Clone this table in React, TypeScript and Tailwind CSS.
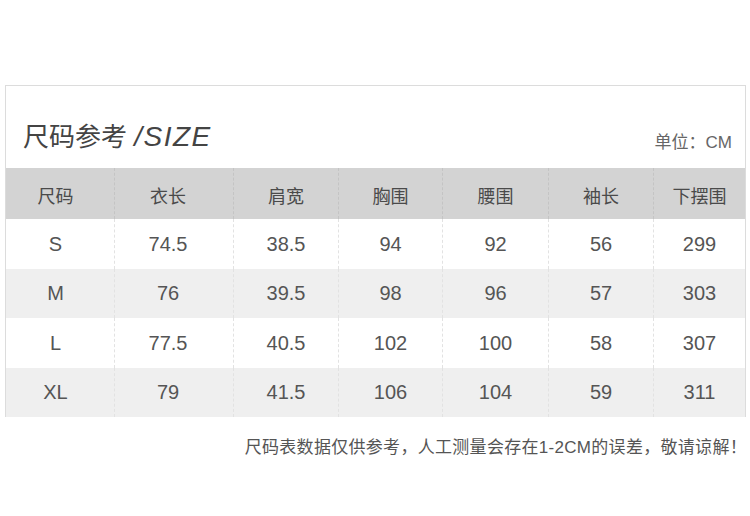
import React from "react";

const headers = ["尺码", "衣长", "肩宽", "胸围", "腰围", "袖长", "下摆围"];

const rows = [
  ["S", "74.5", "38.5", "94", "92", "56", "299"],
  ["M", "76", "39.5", "98", "96", "57", "303"],
  ["L", "77.5", "40.5", "102", "100", "58", "307"],
  ["XL", "79", "41.5", "106", "104", "59", "311"],
];

const cols = "grid grid-cols-[109px_119px_105px_104px_106px_105px_1fr]";
const font = "font-['Liberation_Sans','Noto_Sans_CJK_SC',sans-serif]";

// first two columns sit a bit left of centre in the original
const shift = ["pr-[9px]", "pr-[12px]", "", "", "", "", ""];

const App = () => {
  return (
    <div className={`w-[750px] h-[516px] bg-white pt-[85px] text-[#4a4a4a] ${font}`}>
      <div className="ml-[5px] w-[741px] border-l border-r border-t border-[#dcdcdc]">
        <div className="h-[82px] flex justify-between items-baseline pt-[35px] pl-[17px] pr-[13px]">
          <div className="text-[26px] leading-[32px] text-[#444]">
            尺码参考 <span className="italic text-[28px] tracking-[1.5px]">/SIZE</span>
          </div>
          <div className="text-[17px] text-[#666] translate-y-[2px]">单位：CM</div>
        </div>

        <div className={`${cols} bg-[#d3d3d3] h-[51px]`}>
          {headers.map((h, i) => (
            <div
              key={h}
              className={`flex items-center justify-center pt-[7px] text-[18px] ${shift[i]} ${
                i < 6 ? "border-r border-dashed border-[#c4c4c4]" : ""
              }`}
            >
              {h}
            </div>
          ))}
        </div>

        {rows.map((r, ri) => (
          <div
            key={r[0]}
            className={`${cols} h-[49.5px] ${ri % 2 === 1 ? "bg-[#efefef]" : "bg-white"}`}
          >
            {r.map((v, i) => (
              <div
                key={i}
                className={`flex items-center justify-center text-[20px] text-[#555] ${shift[i]} ${
                  i < 6 ? "border-r border-dashed border-[#e2e2e2]" : ""
                }`}
              >
                {v}
              </div>
            ))}
          </div>
        ))}
      </div>

      <div className="flex justify-end pr-[3px] pt-[20px] text-[17px] leading-[22px] tracking-[0.3px] text-[#555]">
        尺码表数据仅供参考，人工测量会存在1-2CM的误差，敬请谅解！
      </div>
    </div>
  );
};

export default App;
